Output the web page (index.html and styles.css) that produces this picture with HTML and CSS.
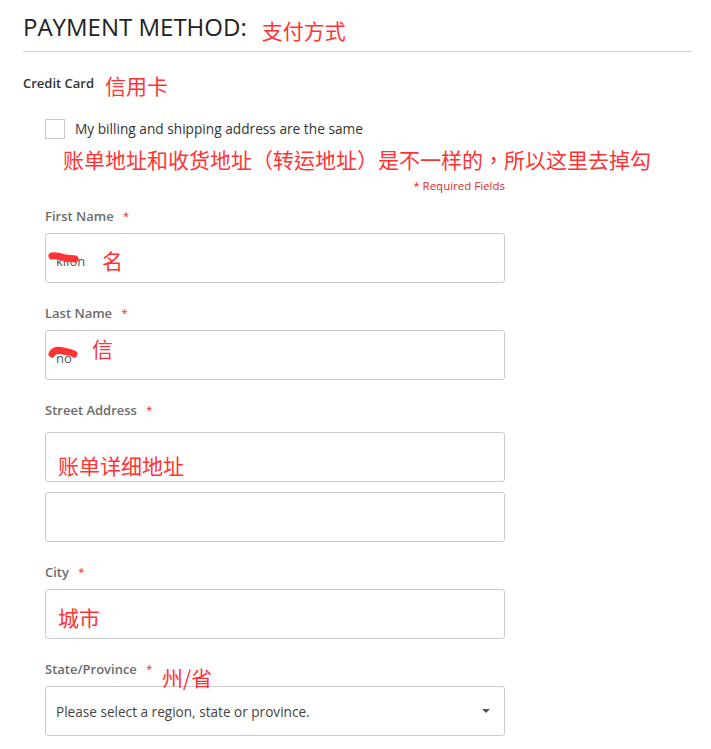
FILE: index.html
```html
<!DOCTYPE html>
<html lang="en">
<head>
<meta charset="utf-8">
<title>Payment Method</title>
<link rel="stylesheet" href="styles.css">
</head>
<body>
<div class="page">
  <div class="title-row">
    <h1 class="title">PAYMENT METHOD:</h1>
    <span class="note note-title">支付方式</span>
  </div>
  <div class="method-row">
    <span class="method">Credit Card</span>
    <span class="note note-method">信用卡</span>
  </div>
  <div class="form">
    <label class="check-row">
      <span class="checkbox"></span>
      <span class="check-text">My billing and shipping address are the same</span>
    </label>
    <div class="note note-line">账单地址和收货地址（转运地址）是不一样的，所以这里去掉勾</div>
    <div class="required"><span class="star">*</span> Required Fields</div>

    <div class="field">
      <div class="label">First Name <span class="star">*</span></div>
      <div class="control">
        <div class="input"><span class="value">kilon</span></div>
        <svg class="scribble s1" width="32" height="14" viewBox="0 0 32 14"><path d="M4 5 C9 4 13 6 17 7 C21 8 25 7 27 8" stroke="#f33" stroke-width="7" fill="none" stroke-linecap="round"/></svg>
        <span class="note note-in n-first">名</span>
      </div>
    </div>

    <div class="field">
      <div class="label">Last Name <span class="star">*</span></div>
      <div class="control">
        <div class="input"><span class="value">no</span></div>
        <svg class="scribble s2" width="32" height="14" viewBox="0 0 32 14"><path d="M4 8 C6 4 11 4 15 5 C20 6 23 6 26 8" stroke="#f33" stroke-width="7" fill="none" stroke-linecap="round"/></svg>
        <span class="note note-in n-last">信</span>
      </div>
    </div>

    <div class="field">
      <div class="label label-street">Street Address <span class="star">*</span></div>
      <div class="control">
        <div class="input"></div>
        <span class="note note-in n-street">账单详细地址</span>
      </div>
      <div class="input input-extra"></div>
    </div>

    <div class="field">
      <div class="label">City <span class="star">*</span></div>
      <div class="control">
        <div class="input"></div>
        <span class="note note-in n-city">城市</span>
      </div>
    </div>

    <div class="field">
      <div class="control">
        <div class="label">State/Province <span class="star">*</span></div>
        <span class="note note-in n-state">州/省</span>
      </div>
      <div class="input select"><span class="value">Please select a region, state or province.</span><span class="arrow"></span></div>
    </div>
  </div>
</div>
</body>
</html>
```

FILE: styles.css
```css
html, body {
  margin: 0;
  padding: 0;
  background: #fff;
}
body {
  font-family: "Open Sans", "Liberation Sans", sans-serif;
  color: #333;
}
.page {
  width: 668px;
  margin-left: 23px;
}
.title-row {
  display: flex;
  align-items: flex-start;
  padding-top: 13px;
  padding-bottom: 10px;
  height: 28px;
  border-bottom: 1px solid #cfcfcf;
}
.title {
  margin: 0;
  font-size: 24px;
  font-weight: 400;
  letter-spacing: 0;
  color: #222;
  line-height: 28px;
}
.note {
  font-family: "Noto Sans CJK SC", sans-serif;
  color: #f33;
  font-size: 21px;
  line-height: 24px;
  font-weight: 400;
}
.note-title {
  margin-left: 15px;
  margin-top: 5px;
}
.method-row {
  display: flex;
  align-items: flex-start;
  margin-top: 22px;
  height: 24px;
}
.method {
  font-size: 13px;
  font-weight: 600;
  color: #333;
  line-height: 18px;
}
.note-method {
  margin-left: 11px;
  margin-top: -1px;
}
.form {
  width: 460px;
  margin-left: 22px;
  margin-top: 21px;
}
.check-row {
  display: flex;
  align-items: center;
  height: 20px;
}
.checkbox {
  box-sizing: border-box;
  width: 20px;
  height: 20px;
  border: 1px solid #c8c8c8;
  background: #fff;
}
.check-text {
  margin-left: 10px;
  font-size: 13.7px;
  color: #333;
  margin-top: -1px;
}
.note-line {
  font-family: "Noto Sans CJK TC", "Noto Sans CJK SC", sans-serif;
  margin-left: 18px;
  margin-top: 8px;
  white-space: nowrap;
}
.required {
  text-align: right;
  font-size: 11.5px;
  color: #e02b27;
  margin-top: 8px;
  line-height: 14px;
}
.star {
  color: #e02b27;
  font-size: 11px;
  font-weight: 400;
  margin-left: 6px;
  vertical-align: top;
}
.required .star {
  margin-left: 0;
  vertical-align: baseline;
}
.field {
  margin-top: 14px;
}
.field + .field {
  margin-top: 21px;
}
.label {
  font-size: 13px;
  font-weight: 600;
  color: #6b6b6b;
  line-height: 18px;
  margin-bottom: 8px;
}
.label-street {
  margin-bottom: 13px;
}
.control {
  position: relative;
}
.input {
  box-sizing: border-box;
  height: 50px;
  border: 1px solid #cbcbcb;
  border-radius: 3px;
  background: #fff;
  display: flex;
  align-items: center;
  padding: 0 10px;
  font-size: 13px;
  color: #555;
}
.input .value {
  margin-top: 6px;
}
.input-extra {
  margin-top: 10px;
}
.select {
  justify-content: space-between;
  color: #444;
  font-size: 13.6px;
}
.select .value {
  margin-top: 0;
}
.arrow {
  width: 0;
  height: 0;
  border-left: 4px solid transparent;
  border-right: 4px solid transparent;
  border-top: 4px solid #555;
  margin-right: 4px;
}
.scribble {
  position: absolute;
}
.s1 { left: 3px; top: 18px; }
.s2 { left: 3px; top: 16px; }
.note-in {
  position: absolute;
}
.n-first { left: 57px; top: 15px; }
.n-last { left: 47px; top: 6px; }
.n-street { left: 13px; top: 21px; }
.n-city { left: 13px; top: 16px; }
.n-state { left: 117px; top: 5px; }
```
